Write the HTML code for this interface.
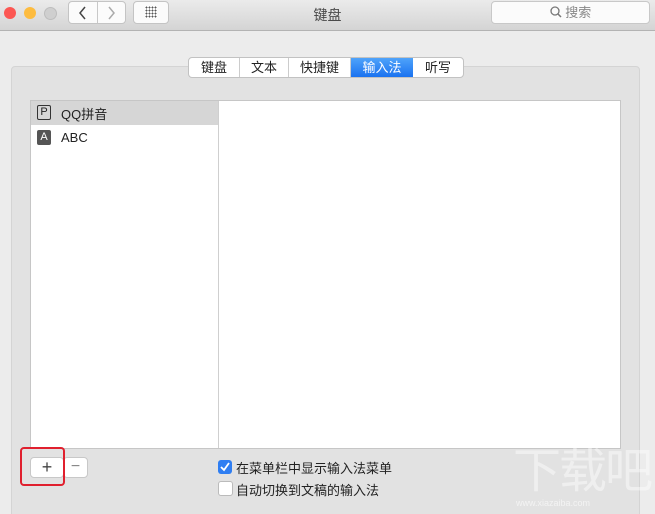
<html><head><style>
html,body{margin:0;width:655px;height:514px;overflow:hidden}
body{background:#ececec;font-family:"Liberation Sans","Noto Sans CJK SC",sans-serif;position:relative}
.a{position:absolute}
</style></head><body>
<div class="a" style="left:0;top:0;width:655px;height:30px;background:linear-gradient(#ebebeb,#d4d4d4);border-bottom:1px solid #b3b3b3"></div>
<div class="a" style="left:4px;top:7px;width:12px;height:12px;border-radius:50%;background:#fc5753"></div>
<div class="a" style="left:24px;top:7px;width:12px;height:12px;border-radius:50%;background:#fdbc40"></div>
<div class="a" style="left:44px;top:7px;width:11px;height:11px;border-radius:50%;background:#cfcfcf;border:1px solid #bdbdbd"></div>
<div class="a" style="left:68px;top:1px;width:56px;height:21px;background:#fbfbfb;border:1px solid #c4c4c4;border-radius:4px"></div>
<div class="a" style="left:97px;top:2px;width:1px;height:21px;background:#c8c8c8"></div>
<svg class="a" style="left:68px;top:1px" width="58" height="24"><path d="M17 6 L12 12 L17 18" stroke="#444" stroke-width="1.5" fill="none"/><path d="M41 6 L46 12 L41 18" stroke="#aaa" stroke-width="1.5" fill="none"/></svg>
<div class="a" style="left:133px;top:1px;width:34px;height:21px;background:#fbfbfb;border:1px solid #c4c4c4;border-radius:4px"></div>
<div class="a" style="left:145px;top:6px;width:12px;height:12px;background:radial-gradient(circle,#555 0.8px,transparent 1px) 0 0/3px 3px"></div>
<div class="a" style="left:0;top:5px;width:655px;text-align:center;font-size:14px;color:#4a4a4a">键盘</div>
<div class="a" style="left:491px;top:1px;width:157px;height:21px;background:#fbfbfb;border:1px solid #c8c8c8;border-radius:4px;text-align:center;font-size:13px;line-height:21px;color:#888"><svg width="12" height="12" style="vertical-align:-1px"><circle cx="5" cy="5" r="4" stroke="#777" stroke-width="1.3" fill="none"/><path d="M8 8 L11 11" stroke="#777" stroke-width="1.5"/></svg> 搜索</div>
<div class="a" style="left:11px;top:66px;width:627px;height:460px;background:#e2e2e2;border:1px solid #d4d4d4;border-radius:4px"></div>
<div class="a" style="left:188px;top:57px;height:19px;display:flex;border:1px solid #c2c2c2;border-radius:4px;background:#fff;overflow:hidden;font-size:13px;line-height:19px;color:#222">
<div style="width:50px;text-align:center;border-right:1px solid #ccc">键盘</div>
<div style="width:48px;text-align:center;border-right:1px solid #ccc">文本</div>
<div style="width:61px;text-align:center;border-right:1px solid #ccc">快捷键</div>
<div style="width:62px;text-align:center;background:linear-gradient(#4fa3fa,#1a72f0);color:#fff">输入法</div>
<div style="width:50px;text-align:center">听写</div></div>
<div class="a" style="left:30px;top:100px;width:589px;height:347px;background:#fff;border:1px solid #c6c6c6"></div>
<div class="a" style="left:218px;top:101px;width:1px;height:347px;background:#cfcfcf"></div>
<div class="a" style="left:31px;top:101px;width:187px;height:24px;background:#d6d6d6"></div>
<div class="a" style="left:37px;top:105px;width:14px;height:15px;border:1.5px solid #333;border-radius:2px;font-size:11px;line-height:13px;text-align:center;color:#222;box-sizing:border-box">P</div>
<div class="a" style="left:61px;top:104px;font-size:13px;color:#222">QQ拼音</div>
<div class="a" style="left:37px;top:130px;width:14px;height:15px;background:#555;border-radius:2px;color:#fff;font-size:11px;line-height:15px;text-align:center">A</div>
<div class="a" style="left:61px;top:130px;font-size:13px;color:#222">ABC</div>
<div class="a" style="left:30px;top:457px;width:32px;height:19px;background:#fff;border:1px solid #c8c8c8;border-radius:4px;text-align:center;font-size:18px;line-height:18px;color:#444">+</div>
<div class="a" style="left:63px;top:457px;width:23px;height:19px;background:#fff;border:1px solid #c8c8c8;border-radius:4px;text-align:center;font-size:16px;line-height:18px;color:#888">−</div>
<div class="a" style="left:20px;top:447px;width:41px;height:35px;border:2px solid #e0202e;border-radius:4px"></div>
<div class="a" style="left:218px;top:460px;width:14px;height:14px;background:#2f7ef2;border-radius:3px"><svg width="14" height="14"><path d="M3 7 L6 10 L11 3" stroke="#fff" stroke-width="1.8" fill="none"/></svg></div>
<div class="a" style="left:236px;top:458px;font-size:13px;color:#222">在菜单栏中显示输入法菜单</div>
<div class="a" style="left:218px;top:481px;width:13px;height:13px;background:#fff;border:1px solid #bbb;border-radius:3px"></div>
<div class="a" style="left:236px;top:480px;font-size:13px;color:#222">自动切换到文稿的输入法</div>
<div class="a" style="left:513px;top:444px;font-size:48px;line-height:56px;white-space:nowrap;color:rgba(255,255,255,.45);letter-spacing:-2px">下载吧</div>
<div class="a" style="left:516px;top:498px;font-size:9px;white-space:nowrap;color:rgba(255,255,255,.6)">www.xiazaiba.com</div>
</body></html>
